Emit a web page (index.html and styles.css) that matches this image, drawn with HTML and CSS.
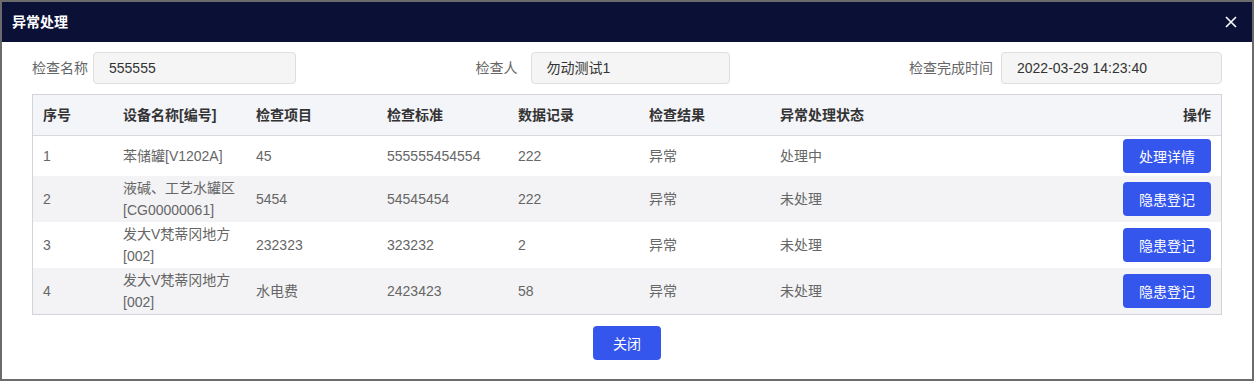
FILE: index.html
```html
<!DOCTYPE html>
<html lang="zh-CN">
<head>
    <meta charset="utf-8">
    <title>异常处理</title>
    <link rel="stylesheet" href="styles.css">
</head>
<body>
    <div class="dialog">
        <div class="dialog-head">
            <span class="dialog-title">异常处理</span>
            <button type="button" class="dialog-close">
                <svg width="12" height="12" viewBox="0 0 12 12"><path d="M1 1L11 11M11 1L1 11" stroke="#fff" stroke-width="1.6" fill="none"/></svg>
            </button>
        </div>
        <div class="dialog-body">
            <div class="info-row">
                <div class="field field-name">
                    <span class="field-label">检查名称</span>
                    <div class="field-value">555555</div>
                </div>
                <div class="field field-person">
                    <span class="field-label">检查人</span>
                    <div class="field-value">勿动测试1</div>
                </div>
                <div class="field field-time">
                    <span class="field-label">检查完成时间</span>
                    <div class="field-value">2022-03-29 14:23:40</div>
                </div>
            </div>

            <div class="table-wrap">
                <table class="grid">
                    <colgroup>
                        <col class="c-no">
                        <col class="c-dev">
                        <col class="c-mid">
                        <col class="c-mid">
                        <col class="c-mid">
                        <col class="c-mid">
                        <col>
                    </colgroup>
                    <thead>
                        <tr>
                            <th>序号</th>
                            <th>设备名称[编号]</th>
                            <th>检查项目</th>
                            <th>检查标准</th>
                            <th>数据记录</th>
                            <th>检查结果</th>
                            <th>异常处理状态</th>
                            <th class="op">操作</th>
                        </tr>
                    </thead>
                    <tbody>
                        <tr>
                            <td>1</td>
                            <td>苯储罐[V1202A]</td>
                            <td>45</td>
                            <td>555555454554</td>
                            <td>222</td>
                            <td>异常</td>
                            <td>处理中</td>
                            <td class="op"><button type="button" class="btn btn-row">处理详情</button></td>
                        </tr>
                        <tr>
                            <td>2</td>
                            <td>液碱、工艺水罐区[CG00000061]</td>
                            <td>5454</td>
                            <td>54545454</td>
                            <td>222</td>
                            <td>异常</td>
                            <td>未处理</td>
                            <td class="op"><button type="button" class="btn btn-row">隐患登记</button></td>
                        </tr>
                        <tr>
                            <td>3</td>
                            <td>发大V梵蒂冈地方[002]</td>
                            <td>232323</td>
                            <td>323232</td>
                            <td>2</td>
                            <td>异常</td>
                            <td>未处理</td>
                            <td class="op"><button type="button" class="btn btn-row">隐患登记</button></td>
                        </tr>
                        <tr>
                            <td>4</td>
                            <td>发大V梵蒂冈地方[002]</td>
                            <td>水电费</td>
                            <td>2423423</td>
                            <td>58</td>
                            <td>异常</td>
                            <td>未处理</td>
                            <td class="op"><button type="button" class="btn btn-row">隐患登记</button></td>
                        </tr>
                    </tbody>
                </table>
            </div>

            <div class="dialog-foot">
                <button type="button" class="btn btn-close">关闭</button>
            </div>
        </div>
    </div>
</body>
</html>
```

FILE: styles.css
```css
body {
    margin: 0;
    padding: 2px;
    background: #6b6b6b;
    font: 14px/22px "Liberation Sans", "Noto Sans CJK SC", sans-serif;
    color: #333;
}

.dialog {
    width: 1250px;
    height: 377px;
    background: #fff;
    display: flex;
    flex-direction: column;
}

.dialog-head {
    height: 40px;
    background: #0a1036;
    display: flex;
    align-items: center;
    justify-content: space-between;
    padding: 0 14px 0 10px;
}
.dialog-title {
    color: #fff;
    font-weight: bold;
}
.dialog-close {
    background: none;
    border: none;
    padding: 0;
    width: 14px;
    height: 14px;
    display: flex;
    align-items: center;
    justify-content: center;
    cursor: pointer;
}

.dialog-body {
    padding: 10px 30px 0;
}

.info-row {
    display: flex;
    justify-content: space-between;
    align-items: center;
}
.field {
    display: flex;
    align-items: center;
}
.field-label {
    color: #666;
}
.field-value {
    height: 30px;
    line-height: 30px;
    padding: 0 15px;
    background: #f5f5f5;
    border: 1px solid #dedede;
    border-radius: 4px;
    color: #333;
    box-sizing: content-box;
}
.field-name .field-value {
    margin-left: 5px;
    width: 171px;
}
.field-person .field-value {
    margin-left: 13px;
    width: 167px;
}
.field-time .field-value {
    margin-left: 8px;
    width: 189px;
}

.table-wrap {
    margin-top: 10px;
    border: 1px solid #d4d4d8;
}
.grid {
    width: 100%;
    border-collapse: collapse;
    table-layout: fixed;
}
.c-no { width: 80px; }
.c-dev { width: 133px; }
.c-mid { width: 131px; }

.grid th {
    height: 40px;
    padding: 0 10px;
    text-align: left;
    font-weight: bold;
    color: #333;
    background: #f4f5f9;
    border-bottom: 1px solid #d9d9dd;
}
.grid tr {
    height: 40px;
}
.grid td {
    padding: 1px 10px;
    color: #666;
    vertical-align: middle;
}
.grid tbody tr:nth-child(even) {
    background: #f3f3f5;
}
.grid .op {
    text-align: right;
}

.btn {
    background: #3456ec;
    color: #fff;
    border: none;
    border-radius: 4px;
    font: 14px "Liberation Sans", "Noto Sans CJK SC", sans-serif;
    height: 34px;
    cursor: pointer;
    vertical-align: middle;
}
.btn-row {
    width: 88px;
}

.dialog-foot {
    display: flex;
    justify-content: center;
    margin-top: 11px;
}
.btn-close {
    width: 68px;
}
```
